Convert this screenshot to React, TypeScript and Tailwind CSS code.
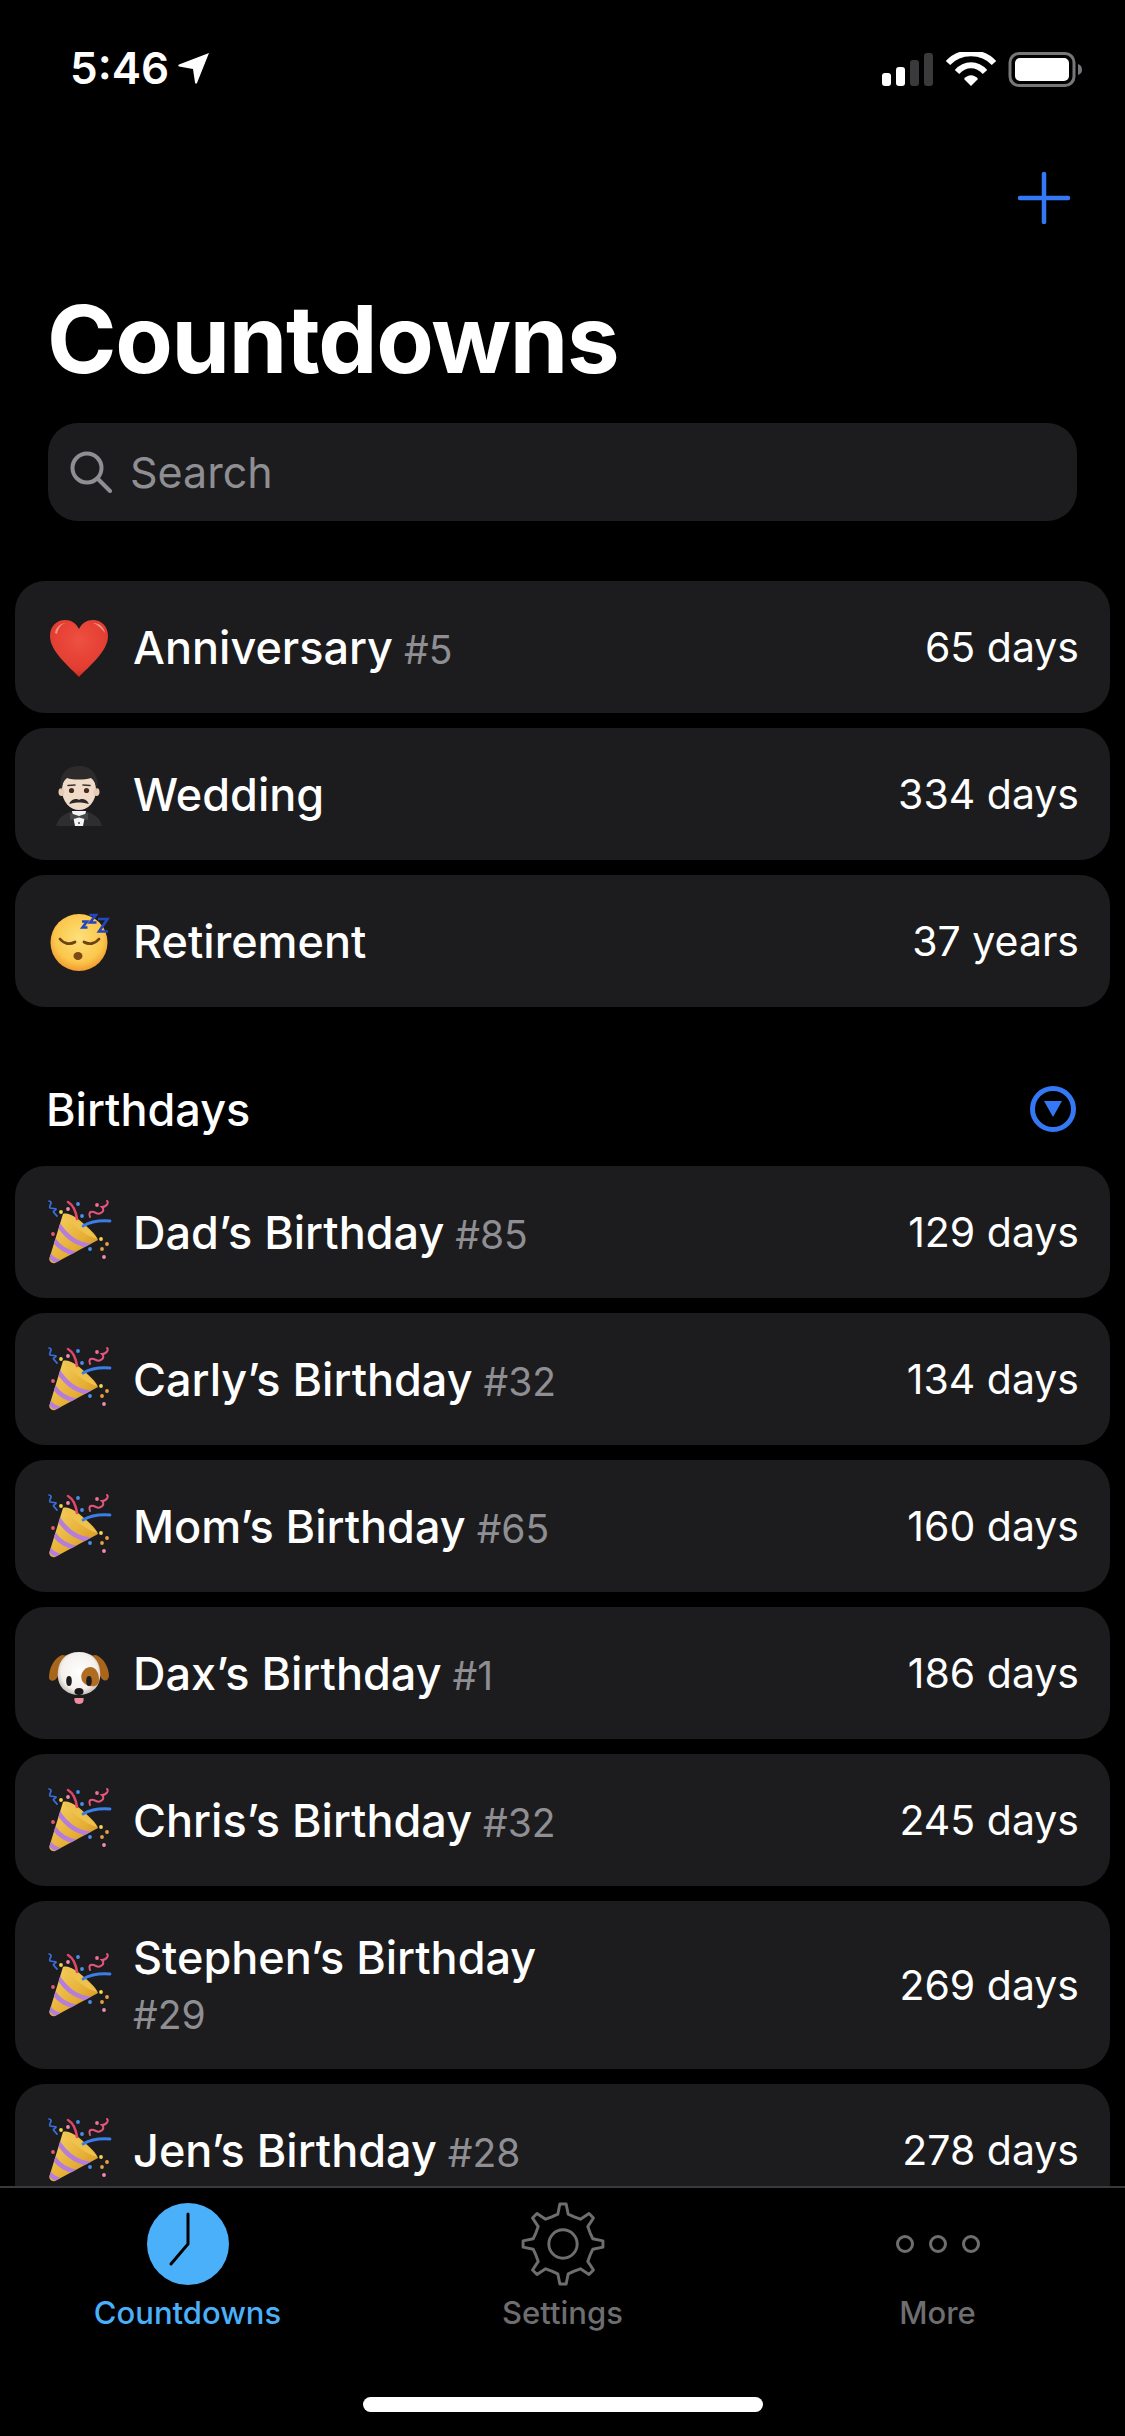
import React from "react";

const Heart = () => (
  <svg viewBox="0 0 66 66" className="w-[66px] h-[66px]">
    <defs>
      <radialGradient id="hg" cx="0.5" cy="0.35" r="0.75">
        <stop offset="0" stopColor="#ee5040" />
        <stop offset="0.7" stopColor="#e23c30" />
        <stop offset="1" stopColor="#b81f1a" />
      </radialGradient>
    </defs>
    <path d="M33 63 C24 53 4 38 4 22 C4 12 11 6 19 6 C25 6 30 9 33 15 C36 9 41 6 47 6 C55 6 62 12 62 22 C62 38 42 53 33 63Z" fill="url(#hg)" />
    <path d="M9 19 C10 13 15 9 20 9 C15 10 12 14 11 20Z M47 9 C53 9 58 13 59 19 C56 15 52 11 47 9Z" fill="#f8a99c" opacity="0.8" />
  </svg>
);

const Man = () => (
  <svg viewBox="0 0 66 66" className="w-[66px] h-[66px]">
    <path d="M10 65 C12 56 19 53 26 50 L40 50 C47 53 54 56 56 65Z" fill="#2e2e30" />
    <path d="M26 50 L40 50 L37 65 L29 65Z" fill="#f4f4f4" />
    <path d="M24 52 L33 55 L42 52 L42 59 L33 56.5 L24 59Z" fill="#47474b" />
    <circle cx="33" cy="62" r="0.9" fill="#333" />
    <ellipse cx="33" cy="29" rx="17" ry="20" fill="#f0dbc9" />
    <ellipse cx="15.5" cy="31" rx="3" ry="4" fill="#e7cbb6" />
    <ellipse cx="50.5" cy="31" rx="3" ry="4" fill="#e7cbb6" />
    <path d="M15 29 C12 12 22 5 33 5 C44 5 54 12 51 29 C50 23 48 19 45 17 C38 19 27 19 21 17 C18 19 16 23 15 29Z" fill="#2c2a2b" />
    <circle cx="25.5" cy="29.5" r="2.6" fill="#4a2a1a" />
    <circle cx="40.5" cy="29.5" r="2.6" fill="#4a2a1a" />
    <path d="M22 24.5 L29 24 M37 24 L44 24.5" stroke="#3a3330" strokeWidth="1.6" strokeLinecap="round" />
    <path d="M23 43 C26 37 31 37.5 33 39 C35 37.5 40 37 43 43 C38 41.5 35 41.5 33 41.5 C31 41.5 28 41.5 23 43Z" fill="#2c2624" />
  </svg>
);

const Sleepy = () => (
  <svg viewBox="0 0 66 66" className="w-[66px] h-[66px]">
    <defs>
      <radialGradient id="sg" cx="0.5" cy="0.42" r="0.6">
        <stop offset="0" stopColor="#fde07a" />
        <stop offset="0.7" stopColor="#fbc74c" />
        <stop offset="1" stopColor="#f1962a" />
      </radialGradient>
    </defs>
    <circle cx="33" cy="34.5" r="28.5" fill="url(#sg)" />
    <path d="M14 31 C18 36 24 37 29 34 M38 34 C43 37 49 36 53 31" stroke="#6d4312" strokeWidth="2.8" fill="none" strokeLinecap="round" />
    <ellipse cx="32" cy="48" rx="4.5" ry="4" fill="#7c4a16" />
    <path d="M36 13.5 H41 L36.5 19.5 H41.5 M43.5 7 H50 L44 14.5 H50.5 M52 11 H61.5 L53 23.5 H62" stroke="#2547bd" strokeWidth="2.6" fill="none" strokeLinejoin="miter" />
  </svg>
);

const Popper = () => (
  <svg viewBox="0 0 66 66" className="w-[66px] h-[66px]">
    <defs>
      <linearGradient id="pg" x1="0" y1="0" x2="1" y2="1">
        <stop offset="0" stopColor="#f6d465" />
        <stop offset="0.6" stopColor="#e6ae35" />
        <stop offset="1" stopColor="#c98a1e" />
      </linearGradient>
      <clipPath id="pc">
        <path d="M3.5 59 L17 15 C23 13 31 19 38 25 C45 31 51 37 52 41 L9 64 C6 65 2.5 62 3.5 59Z" />
      </clipPath>
    </defs>
    <path d="M3.5 59 L17 15 C23 13 31 19 38 25 C45 31 51 37 52 41 L9 64 C6 65 2.5 62 3.5 59Z" fill="url(#pg)" />
    <g clipPath="url(#pc)" fill="none" stroke="#b57edb" strokeWidth="4.6">
      <path d="M12 25 C19 36 30 46 46 47" />
      <path d="M8 41 C12 47 20 53 31 55" />
      <path d="M3 56 C6 60 9 62 14 63" />
    </g>
    <path d="M18 16 C24 15 31 20 38 26 C44 31 50 37 51 40 C44 38 36 33 30 28 C24 23 19 19 18 16Z" fill="#eec24c" />
    <path d="M31 20 C30 13 27 6 22 3" stroke="#e2476a" strokeWidth="2.6" fill="none" strokeLinecap="round" />
    <path d="M37 27 C44 23 52 21 64 22" stroke="#3b7ee8" strokeWidth="2.8" fill="none" strokeLinecap="round" />
    <path d="M44 18 C42 12 46 12 50 14 C54 16 60 12 56 8 C61 8 63 3 61 2" stroke="#e2557c" strokeWidth="2" fill="none" strokeLinecap="round" />
    <path d="M3 2 C8 3 2 7 4 9 C8 10 13 9 8 12 C6 13 10 15 11 17" stroke="#3a6fe0" strokeWidth="1.7" fill="none" strokeLinecap="round" />
    {[
      [15, 13, "#f7d94c"],
      [32, 5, "#4a8ef0"],
      [22, 10, "#ef8fb0"],
      [36, 17, "#4a8ef0"],
      [51, 6, "#ef6f95"],
      [7, 35, "#e8587a"],
      [55, 40, "#f7d94c"],
      [61, 45, "#f0a040"],
      [56, 50, "#e8a040"],
      [44, 50, "#4a8ef0"],
      [58, 58, "#ef8fb0"],
    ].map(([x, y, c], i) => (
      <circle key={i} cx={x as number} cy={y as number} r="1.9" fill={c as string} />
    ))}
  </svg>
);

const Dog = () => (
  <svg viewBox="0 0 66 66" className="w-[66px] h-[66px]">
    <defs>
      <radialGradient id="dg" cx="0.5" cy="0.45" r="0.6">
        <stop offset="0" stopColor="#ffffff" />
        <stop offset="0.7" stopColor="#f4f0ec" />
        <stop offset="1" stopColor="#b9afa6" />
      </radialGradient>
    </defs>
    <path d="M16 15 C8 18 3 28 3 38 C4 42 9 42 12 36 L24 16Z" fill="#a8651c" />
    <path d="M50 15 C58 18 63 28 63 36 C62 42 57 42 54 36 L42 16Z" fill="#a8651c" />
    <path d="M33 12 C20 12 13 20 12 31 C10 46 20 55 33 55 C46 55 56 46 54 31 C53 20 46 12 33 12Z" fill="url(#dg)" />
    <path d="M44 27 C50 27 53 33 53 40 C53 46 48 47 43 46 C36 44 34 38 36 33 C38 29 41 27 44 27Z" fill="#b06c20" />
    <ellipse cx="23" cy="41" rx="2.8" ry="5" fill="#1d1d1f" />
    <ellipse cx="43" cy="41" rx="2.8" ry="5" fill="#1d1d1f" />
    <path d="M33 64 C29 64 28 61 28.5 58 L37.5 58 C38 61 37 64 33 64Z" fill="#ef8d9c" />
    <ellipse cx="33" cy="51.5" rx="4.5" ry="3.5" fill="#17171a" />
  </svg>
);

const Emoji = ({ kind }: { kind: string }) => {
  if (kind === "heart") return <Heart />;
  if (kind === "man") return <Man />;
  if (kind === "sleepy") return <Sleepy />;
  if (kind === "dog") return <Dog />;
  return <Popper />;
};

const Row = ({ e, name, tag, right }: { e: string; name: string; tag?: string; right: string }) => (
  <div className="shrink-0 min-h-[132px] rounded-[30px] bg-[#1c1c1e] flex items-center pl-[31px] pr-[31px] py-[29px]">
    <div className="w-[66px] h-[66px] shrink-0 mr-[21px]">
      <Emoji kind={e} />
    </div>
    <div className="flex-1 min-w-0">
      <div className="max-w-[470px] text-[45px] leading-[55px] font-medium text-white">
        {name}
        {tag && <span className="text-[39px] leading-none font-normal text-[#8e8e93]"> {tag}</span>}
      </div>
    </div>
    <div className="text-[41px] leading-[55px] text-white shrink-0">{right}</div>
  </div>
);

const gearPoints = (() => {
  const pts: string[] = [];
  const n = 8;
  for (let i = 0; i < n; i++) {
    const a = (i * 2 * Math.PI) / n - Math.PI / 2;
    const s = (2 * Math.PI) / n;
    const offs: [number, number][] = [
      [-0.5, 30],
      [-0.22, 31],
      [-0.1, 41],
      [0.1, 41],
      [0.22, 31],
    ];
    offs.forEach(([o, r]) => {
      const t = a + o * s;
      pts.push(`${(43 + r * Math.cos(t)).toFixed(2)},${(43 + r * Math.sin(t)).toFixed(2)}`);
    });
  }
  return pts.join(" ");
})();

export default function App() {
  return (
    <div className="w-[1125px] h-[2436px] bg-black flex flex-col overflow-hidden font-['Inter',sans-serif]">
      {/* status bar */}
      <div className="h-[140px] shrink-0 flex justify-between pl-[70px] pr-[40px] pt-[41px]">
        <div className="flex items-start">
          <span className="text-[44px] leading-[54px] font-semibold text-white">5:46</span>
          <svg viewBox="0 0 32 32" className="w-[32px] h-[32px] ml-[9px] mt-[11px]">
            <path d="M31 1 L19 31 C18.5 32 17 32 17 30.5 L15 17 L1 14.5 C0 14 0 13 1 12.5Z" fill="#fff" />
          </svg>
        </div>
        <svg viewBox="0 0 205 36" className="w-[205px] h-[36px] mt-[11px]">
          <rect x="2" y="21" width="9" height="13" rx="3" fill="#fff" />
          <rect x="16" y="15" width="9" height="19" rx="3" fill="#fff" />
          <rect x="30" y="8" width="9" height="26" rx="3" fill="#3a3a3c" />
          <rect x="44" y="1" width="9" height="33" rx="3" fill="#3a3a3c" />
          <path d="M68 11 C80 -2 102 -2 114 11" stroke="#fff" strokeWidth="6" fill="none" />
          <path d="M77 20 C85 11 97 11 105 20" stroke="#fff" strokeWidth="6" fill="none" />
          <path d="M84 27 C88 22 94 22 98 27 L91 34Z" fill="#fff" />
          <rect x="130" y="1.5" width="64" height="32" rx="9" stroke="#77777a" strokeWidth="3" fill="none" />
          <rect x="135" y="6" width="54" height="23" rx="5" fill="#fff" />
          <path d="M198 12 C201 13 202 15 202 18 C202 20 201 22 198 23Z" fill="#77777a" />
        </svg>
      </div>

      {/* add row */}
      <div className="h-[116px] shrink-0 flex items-center justify-end pr-[55px]">
        <svg viewBox="0 0 52 52" className="w-[52px] h-[52px]">
          <path d="M26 2 V50 M2 26 H50" stroke="#3478f6" strokeWidth="4.5" strokeLinecap="round" />
        </svg>
      </div>

      {/* title */}
      <h1 className="h-[167px] shrink-0 pl-[47px] pt-[26px] text-[94px] leading-[114px] font-bold text-white tracking-[-1.3px]">
        Countdowns
      </h1>

      {/* search */}
      <div className="shrink-0 mx-[48px] h-[98px] rounded-[30px] bg-[#1c1c1e] flex items-center pl-[22px]">
        <svg viewBox="0 0 42 42" className="w-[42px] h-[42px] mr-[18px]" fill="none" stroke="#8e8e93" strokeWidth="4">
          <circle cx="17" cy="17" r="14.5" />
          <path d="M27.5 27.5 L40 40" strokeLinecap="round" />
        </svg>
        <span className="text-[43px] text-[#8e8e93]">Search</span>
      </div>

      {/* list */}
      <div className="flex-1 min-h-0 overflow-hidden px-[15px] pt-[60px] flex flex-col gap-[15px]">
        <Row e="heart" name="Anniversary" tag="#5" right="65 days" />
        <Row e="man" name="Wedding" right="334 days" />
        <Row e="sleepy" name="Retirement" right="37 years" />

        <div className="shrink-0 h-[129px] flex items-center justify-between pl-[31px] pr-[15px] pt-[45px]">
          <span className="text-[45px] leading-[55px] font-medium text-white">Birthdays</span>
          <svg viewBox="0 0 46 46" className="w-[46px] h-[46px] mr-[19px]">
            <circle cx="23" cy="23" r="20.5" fill="none" stroke="#3478f6" strokeWidth="5" />
            <path d="M14 15 H32 L23 31Z" fill="#3478f6" />
          </svg>
        </div>

        <Row e="popper" name="Dad’s Birthday" tag="#85" right="129 days" />
        <Row e="popper" name="Carly’s Birthday" tag="#32" right="134 days" />
        <Row e="popper" name="Mom’s Birthday" tag="#65" right="160 days" />
        <Row e="dog" name="Dax’s Birthday" tag="#1" right="186 days" />
        <Row e="popper" name="Chris’s Birthday" tag="#32" right="245 days" />
        <Row e="popper" name="Stephen’s Birthday" tag="#29" right="269 days" />
        <Row e="popper" name="Jen’s Birthday" tag="#28" right="278 days" />
      </div>

      {/* tab bar */}
      <div className="h-[250px] shrink-0 bg-black border-t-2 border-[#3a3a3c] relative">
        <div className="grid grid-cols-3 pt-[14px]">
          <div className="flex flex-col items-center">
            <svg viewBox="0 0 82 82" className="w-[82px] h-[84px]">
              <circle cx="41" cy="41" r="41" fill="#4ab0fa" />
              <path d="M41 11 V41 L24 61" stroke="#000" strokeWidth="3" fill="none" strokeLinecap="round" />
            </svg>
            <span className="mt-[9px] text-[31px] leading-[36px] font-medium text-[#4ab0fa]">Countdowns</span>
          </div>
          <div className="flex flex-col items-center">
            <svg viewBox="0 0 86 86" className="w-[84px] h-[84px]">
              <polygon points={gearPoints} fill="none" stroke="#6e6e70" strokeWidth="3" strokeLinejoin="round" />
              <circle cx="43" cy="43" r="14.5" fill="none" stroke="#6e6e70" strokeWidth="3" />
            </svg>
            <span className="mt-[9px] text-[31px] leading-[36px] font-medium text-[#6e6e70]">Settings</span>
          </div>
          <div className="flex flex-col items-center">
            <svg viewBox="0 0 84 84" className="w-[84px] h-[84px]">
              <circle cx="9" cy="42" r="7.5" fill="none" stroke="#6e6e70" strokeWidth="3" />
              <circle cx="42" cy="42" r="7.5" fill="none" stroke="#6e6e70" strokeWidth="3" />
              <circle cx="75" cy="42" r="7.5" fill="none" stroke="#6e6e70" strokeWidth="3" />
            </svg>
            <span className="mt-[9px] text-[31px] leading-[36px] font-medium text-[#6e6e70]">More</span>
          </div>
        </div>
        <div className="absolute left-[363px] bottom-[24px] w-[400px] h-[15px] rounded-full bg-white" />
      </div>
    </div>
  );
}
